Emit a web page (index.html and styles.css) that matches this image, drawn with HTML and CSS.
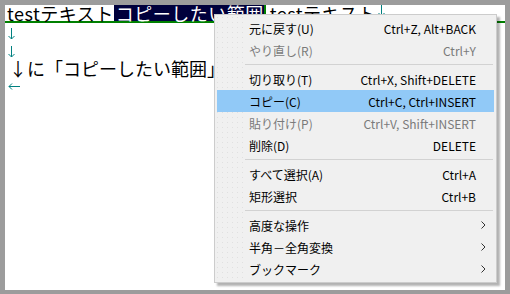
FILE: index.html
```html
<!DOCTYPE html>
<html lang="ja">
<head>
    <meta charset="UTF-8">
    <title>エディタ | コンテキストメニュー</title>
    <link rel="stylesheet" href="styles.css">
</head>
<body>
    <div class="window">
        <div class="editor">
            <div class="line current">
                <span>testテキスト</span><span class="sel">コピーしたい範囲</span><span class="caret"></span><span class="after">testテキスト</span><svg class="eol" width="7" height="12" viewBox="0 0 7 12"><path d="M3.5 0V11M0.5 8L3.5 11L6.5 8" fill="none" stroke="currentColor"/></svg>
            </div>
            <div class="line"><svg class="eol" width="7" height="12" viewBox="0 0 7 12"><path d="M3.5 0V11M0.5 8L3.5 11L6.5 8" fill="none" stroke="currentColor"/></svg></div>
            <div class="line"><svg class="eol" width="7" height="12" viewBox="0 0 7 12"><path d="M3.5 0V11M0.5 8L3.5 11L6.5 8" fill="none" stroke="currentColor"/></svg></div>
            <div class="line plain"><span>↓に「コピーしたい範囲」</span><svg class="eol" width="7" height="12" viewBox="0 0 7 12"><path d="M3.5 0V11M0.5 8L3.5 11L6.5 8" fill="none" stroke="currentColor"/></svg></div>
            <div class="line"><svg class="eof" width="12" height="7" viewBox="0 0 12 7"><path d="M12 3.5H1M4 0.5L1 3.5L4 6.5" fill="none" stroke="currentColor"/></svg></div>

            <div class="menu">
                <div class="menu-item"><span class="label">元に戻す(U)</span><span class="key">Ctrl+Z, Alt+BACK</span><span class="sub"></span></div>
                <div class="menu-item disabled"><span class="label">やり直し(R)</span><span class="key">Ctrl+Y</span><span class="sub"></span></div>
                <div class="menu-sep"></div>
                <div class="menu-item"><span class="label">切り取り(T)</span><span class="key">Ctrl+X, Shift+DELETE</span><span class="sub"></span></div>
                <div class="menu-item active"><span class="label">コピー(C)</span><span class="key">Ctrl+C, Ctrl+INSERT</span><span class="sub"></span></div>
                <div class="menu-item disabled"><span class="label">貼り付け(P)</span><span class="key">Ctrl+V, Shift+INSERT</span><span class="sub"></span></div>
                <div class="menu-item"><span class="label">削除(D)</span><span class="key">DELETE</span><span class="sub"></span></div>
                <div class="menu-sep"></div>
                <div class="menu-item"><span class="label">すべて選択(A)</span><span class="key">Ctrl+A</span><span class="sub"></span></div>
                <div class="menu-item"><span class="label">矩形選択</span><span class="key">Ctrl+B</span><span class="sub"></span></div>
                <div class="menu-sep"></div>
                <div class="menu-item"><span class="label">高度な操作</span><span class="key"></span><span class="sub"><svg width="5" height="8" viewBox="0 0 5 8"><path d="M0.5 0.5L4 4L0.5 7.5" fill="none" stroke="currentColor"/></svg></span></div>
                <div class="menu-item"><span class="label">半角－全角変換</span><span class="key"></span><span class="sub"><svg width="5" height="8" viewBox="0 0 5 8"><path d="M0.5 0.5L4 4L0.5 7.5" fill="none" stroke="currentColor"/></svg></span></div>
                <div class="menu-item"><span class="label">ブックマーク</span><span class="key"></span><span class="sub"><svg width="5" height="8" viewBox="0 0 5 8"><path d="M0.5 0.5L4 4L0.5 7.5" fill="none" stroke="currentColor"/></svg></span></div>
            </div>
        </div>
    </div>
</body>
</html>
```

FILE: styles.css
```css
:root {
    --frame-color: #9c9c9c;
    --sel-color: #00003c;
    --caret-color: #008000;
    --mark-color: #008080;
    --menu-bg: #f0f0f0;
    --menu-hover: #91c9f7;
}

* {
    margin: 0;
    padding: 0;
    box-sizing: border-box;
}

body {
    background: var(--frame-color);
    font-family: "Noto Sans CJK JP", sans-serif;
}

.window {
    padding: 5px;
    width: 510px;
    height: 294px;
}

.editor {
    position: relative;
    width: 500px;
    height: 285px;
    background: #ffffff;
    padding-left: 2px;
    overflow: hidden;
}

.line {
    height: 18px;
    display: flex;
    align-items: center;
    font-size: 18px;
    line-height: 18px;
    letter-spacing: 0.5px;
    white-space: nowrap;
    color: #000000;
}

.line.plain {
    letter-spacing: 0;
    padding-left: 2px;
}

.line.current {
    margin-left: -2px;
    padding-left: 2px;
    border-bottom: 2px solid var(--caret-color);
    align-items: flex-start;
}

.line.current span {
    display: inline-block;
    min-height: 16px;
    line-height: 16px;
}

.sel {
    background: var(--sel-color);
    color: #ffffff;
    padding-left: 2px;
}

.caret {
    width: 2px;
    height: 16px;
    background: var(--caret-color);
}

.after {
    margin-left: 4px;
}

.eol {
    color: var(--mark-color);
    margin-left: 1px;
}

.eof {
    color: var(--mark-color);
    margin-left: 1px;
}

.line:nth-child(2) .eol,
.line:nth-child(3) .eol {
    margin-left: 1px;
    margin-top: 3px;
}

/* menu */
.menu {
    position: absolute;
    left: 209px;
    top: 9px;
    width: 283px;
    padding: 2px;
    border: 1px solid #cccccc;
    background:
        linear-gradient(to right, transparent 28px, var(--menu-bg) 28px),
        radial-gradient(circle, #e0e0e0 0.6px, transparent 0.8px) 0 0 / 5px 5px,
        var(--menu-bg);
    box-shadow: 3px 3px 2px rgba(0, 0, 0, 0.3);
    font-size: 12px;
}

.menu-item {
    display: flex;
    align-items: center;
    height: 22px;
    padding-left: 32px;
    padding-right: 8px;
    color: #000000;
}

.menu-item.disabled {
    color: #7a7a7a;
}

.menu-item.active {
    background: var(--menu-hover);
}

.menu-item .label {
    flex: 1;
}

.menu-item .key {
    text-align: right;
}

.menu-item .sub {
    width: 10px;
    display: flex;
    justify-content: flex-end;
    color: #333333;
}

.menu-sep {
    height: 7px;
    margin-left: 28px;
    margin-right: 1px;
    display: flex;
    align-items: center;
}

.menu-sep::after {
    content: "";
    flex: 1;
    height: 1px;
    background: #d2d2d2;
}
```
